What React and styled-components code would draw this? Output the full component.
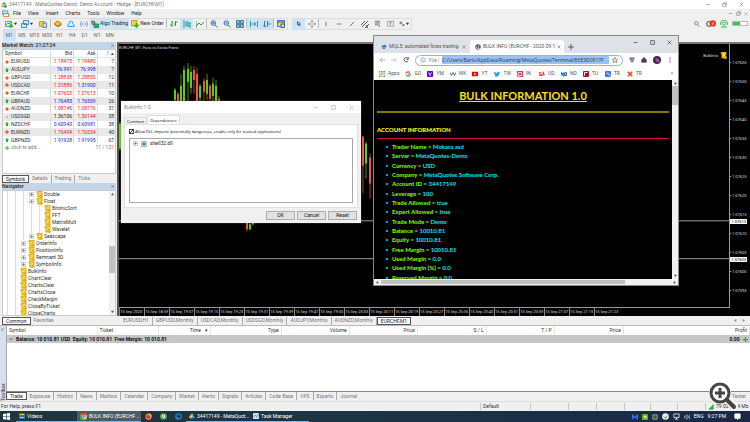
import React, { useState } from 'react'
import styled, { createGlobalStyle, css } from 'styled-components'

const GlobalStyle = createGlobalStyle`
* { box-sizing: border-box; }
body {
  margin: 0;
  overflow: hidden;
  font-family: Roboto, "Open Sans", sans-serif;
  font-size: 5px;
  line-height: 7px;
  color: #333;
}
button, input { font: inherit; color: inherit; margin: 0; }
button { border: 0; padding: 0; background: none; white-space: nowrap; }
a { color: inherit; text-decoration: none; }
svg { display: block; flex: none; }
`

const Desktop = styled.div`
position: relative;
display: flex;
flex-direction: column;
height: 100vh;
overflow: hidden;
background: #f0f0f0;
`

const Spacer = styled.span`
flex: 1;
`

/* ---------- top bars ---------- */
const TitleBar = styled.header`
display: flex;
align-items: center;
gap: 2px;
height: 9px;
padding: 0 6px 0 1px;
background: #fff;
color: #777;
`
const WinButtons = styled.div`
display: flex;
align-items: center;
gap: ${props => props.$gap || '12px'};
color: ${props => props.$color || '#888'};
`
const MenuBar = styled.nav`
display: flex;
align-items: center;
gap: 7px;
height: 9px;
padding: 0 2px;
color: #222;
svg + button { margin-left: -3px; }
`
const ToolRow = styled.div`
display: flex;
align-items: center;
height: 11px;
padding: 0 2px 0 3px;
gap: 4px;
`
const ToolGroup = styled.div`
display: flex;
align-items: center;
height: 12px;
border: 1px solid #dcdcdc;
border-left: 0;
`
const Tool = styled.button`
display: flex;
align-items: center;
justify-content: center;
gap: 1px;
height: 10px;
width: ${props => props.$wide || '13px'};
background: ${props => props.$on ? '#cce4f7' : 'transparent'};
color: #222;
`
const Divider = styled.span`
width: 1px;
height: 9px;
background: #bbb;
`
const Frames = styled.div`
display: flex;
width: 113px;
height: 11px;
margin: 1px 0 1px 3px;
color: #666;
button {
  flex: 1;
}
`
const FrameButton = styled.button`
background: ${props => props.$on ? '#cce4f7' : 'transparent'};
`
const Battery = styled.span`
width: 16px;
height: 5px;
border: 1px solid #bbb;
background: linear-gradient(90deg, #2ed03a 50%, #fff 50%);
`

/* ---------- docked panels ---------- */
const Workspace = styled.main`
display: flex;
flex: 1;
min-height: 0;
`
const Sidebar = styled.aside`
display: flex;
flex-direction: column;
width: 116px;
flex: none;
padding-left: 2px;
`
const Panel = styled.section`
display: flex;
flex-direction: column;
min-height: 0;
flex: ${props => props.$grow ? 1 : '0 0 141px'};
`
const Caption = styled.h2`
display: flex;
align-items: center;
justify-content: space-between;
flex: none;
height: 7px;
margin: 0;
padding: 0 2px 0 0;
background: #c3d5e6;
font-size: 5px;
font-weight: 500;
color: #222;
`
const PanelBody = styled.div`
display: flex;
flex: 1;
min-height: 0;
overflow: hidden;
background: #fff;
border: 1px solid #ccc;
`
const Tabs = styled.div`
display: flex;
align-items: center;
flex: none;
height: ${props => props.$line ? '10px' : '9px'};
padding-left: ${props => props.$indent || '0'};
padding-bottom: ${props => props.$line ? '1px' : '0'};
border-top: ${props => props.$line ? '1px solid #888' : '0'};
color: #777;
`
const Tab = styled.button`
height: 8px;
line-height: 7px;
padding: 0 3px;
border-right: 1px solid ${props => props.$last ? 'transparent' : '#aaa'};
${props => props.$on && css`
  border: 1px solid #555;
  background: #fff;
  color: #222;
`}
`
const Quotes = styled.table`
width: 100%;
height: 101px;
border-collapse: collapse;
th, td {
  padding: 0 1px 0 0;
  line-height: 7px;
  font-weight: 400;
  text-align: right;
}
th { color: #333; border-bottom: 1px solid #e4e4e4; }
th + th, td + td { border-left: 1px solid #ddd; }
th:first-child, td:first-child { text-align: left; padding-left: 2px; }
tbody tr:nth-child(even) { background: #e9e9e9; }
tfoot td, tfoot td + td { color: #777; border-left: 0; background: #fff; }
`
const QuotesBox = styled.div`
flex: 1;
`
const SymbolCell = styled.span`
display: flex;
align-items: center;
gap: 2px;
`
const Quote = styled.td`
color: ${props => props.$tone};
`

const Tree = styled.ul`
flex: 1;
margin: 0;
padding: 0;
list-style: none;
overflow: hidden;
`
const Node = styled.li`
display: flex;
align-items: center;
height: 7px;
white-space: nowrap;
`
const Guide = styled.span`
width: 8px;
height: 7px;
background: linear-gradient(90deg, transparent 4px, #ddd 4px, #ddd 5px, transparent 5px);
`
const Cell = styled.span`
display: flex;
justify-content: center;
width: 8px;
margin-right: ${props => props.$icon ? '1px' : '0'};
`
const ScrollBar = styled.div`
display: flex;
flex-direction: ${props => props.$row ? 'row' : 'column'};
align-items: center;
justify-content: space-between;
flex: none;
width: ${props => props.$row ? 'auto' : '6px'};
height: ${props => props.$row ? '6px' : 'auto'};
padding: ${props => props.$row ? '0 2px' : '2px 0'};
background: #f1f1f1;
color: #555;
`
const Track = styled.span`
flex: 1;
align-self: stretch;
margin: ${props => props.$row ? '1px 2px' : '1px 0'};
background: linear-gradient(${props => props.$row ? '90deg' : '180deg'},
  transparent ${props => props.$from}, #c1c1c1 ${props => props.$from},
  #c1c1c1 ${props => props.$to}, transparent ${props => props.$to});
`

/* ---------- chart ---------- */
const ChartColumn = styled.section`
display: flex;
flex-direction: column;
flex: 1;
min-width: 0;
padding-left: 1px;
`
const ChartFrame = styled.div`
position: relative;
display: grid;
grid-template-columns: 1fr 20px;
grid-template-rows: 1fr 8px;
flex: 1;
min-height: 0;
border-left: 2px solid #555;
border-top: 2px solid #777;
background: #000;
color: #ddd;
font-size: 4px;
line-height: 5px;
`
const Plot = styled.div`
position: relative;
min-height: 0;
border-right: 1px solid #999;
border-bottom: 1px solid #999;
overflow: hidden;
> svg { width: 100%; height: 100%; }
`
const ChartHead = styled.div`
position: absolute;
top: 1px;
left: 0;
right: 2px;
display: flex;
justify-content: space-between;
`
const ExpertName = styled.span`
display: flex;
align-items: center;
gap: 2px;
padding-top: 7px;
`
const Prices = styled.div`
display: flex;
flex-direction: column;
justify-content: space-between;
padding: 16px 0 15px;
span {
  display: flex;
  align-items: center;
  gap: 1px;
}
span::before {
  content: '';
  width: 1px;
  height: 1px;
  background: #999;
}
`
const Times = styled.div`
display: flex;
grid-column: 1 / 3;
overflow: hidden;
span {
  width: 25px;
  flex: none;
  border-left: 1px solid #888;
  line-height: 7px;
  white-space: nowrap;
}
`
const PriceTag = styled.span`
position: absolute;
right: 3px;
top: ${props => props.$top};
padding: 0 1px;
background: #fff;
color: #000;
`

/* ---------- toolbox ---------- */
const Toolbox = styled.section`
display: flex;
flex: 0 0 76px;
border-top: 1px solid #bbb;
`
const SideLabel = styled.div`
display: flex;
align-items: center;
justify-content: space-between;
width: 6px;
padding-bottom: 2px;
background: #d5e0ec;
writing-mode: vertical-rl;
transform: rotate(180deg);
line-height: 6px;
color: #222;
`
const ToolboxBody = styled.div`
display: flex;
flex-direction: column;
flex: 1;
min-width: 0;
`
const TradeArea = styled.div`
flex: 1;
background: #fff;
border-left: 1px solid #aaa;
`
const TradeTable = styled.table`
width: 100%;
table-layout: fixed;
border-collapse: collapse;
th {
  height: 9px;
  padding: 0 2px;
  font-weight: 400;
  text-align: right;
  border-right: 1px solid #e5e5e5;
}
th:nth-child(-n+2) { text-align: left; }
td {
  height: 8px;
  padding: 0 2px;
  background: #c6c6c6;
  color: #111;
  font-weight: 700;
  white-space: nowrap;
}
td:last-child { text-align: right; }
`
const SummaryLine = styled.span`
display: flex;
align-items: center;
justify-content: ${props => props.$end ? 'flex-end' : 'flex-start'};
gap: 3px;
`
const StatusBar = styled.footer`
display: flex;
align-items: center;
flex: none;
height: 10px;
padding-left: 1px;
border-top: 1px solid #ddd;
`
const StatusCell = styled.span`
display: flex;
align-items: center;
gap: 2px;
height: 7px;
width: ${props => props.$w};
padding-left: 2px;
border-left: 1px solid #c4c4c4;
white-space: nowrap;
`

/* ---------- taskbar ---------- */
const TaskBar = styled.nav`
display: flex;
align-items: center;
flex: none;
height: 11px;
background: linear-gradient(90deg, #20353f, #1d3445 50%, #1a2747);
color: #fff;
`
const Task = styled.button`
display: flex;
align-items: center;
gap: 2px;
height: 11px;
width: ${props => props.$w};
padding: 0 3px;
background: ${props => props.$on ? '#4a5c65' : 'transparent'};
border-bottom: 1px solid ${props => props.$open ? '#76b9ed' : 'transparent'};
justify-content: ${props => props.$center ? 'center' : 'flex-start'};
`
const Tray = styled.div`
display: flex;
align-items: center;
gap: 4px;
padding-right: 9px;
`

/* ---------- floating windows ---------- */
const Dialog = styled.form`
position: absolute;
left: 121px;
top: 101px;
width: 240px;
display: flex;
flex-direction: column;
background: #f0f0f0;
box-shadow: 0 0 1px #888;
`
const DialogTitle = styled.header`
display: flex;
align-items: center;
justify-content: space-between;
height: 12px;
padding: 0 7px 0 3px;
background: #fff;
color: #888;
`
const DialogTabs = styled.div`
display: flex;
align-items: flex-end;
height: 10px;
margin: 1px 3px 0;
font-family: "Open Sans", sans-serif;
font-size: 4px;
`
const DialogTab = styled.button`
height: ${props => props.$on ? '9px' : '7px'};
padding: 0 2px;
border: 1px solid #ddd;
border-bottom: 0;
background: ${props => props.$on ? '#fff' : '#f0f0f0'};
color: #000;
`
const DialogPage = styled.div`
display: flex;
flex-direction: column;
gap: 3px;
height: 84px;
margin: 0 3px;
padding: 3px 4px 4px;
background: #fff;
border: 1px solid #e0e0e0;
`
const CheckRow = styled.label`
display: flex;
align-items: center;
gap: 1px;
font-family: "Open Sans", sans-serif;
font-size: 4px;
color: #000;
input {
  appearance: none;
  width: 5px;
  height: 5px;
  border: 1px solid #444;
  background: #fff;
}
input:checked {
  background: linear-gradient(135deg, #fff 40%, #444 40%, #444 60%, #fff 60%);
}
`
const DllList = styled.ul`
flex: 1;
margin: 0;
padding: 1px 3px;
list-style: none;
border: 1px solid #a8a8a8;
li {
  display: flex;
  align-items: center;
  gap: 3px;
  color: #222;
}
`
const DialogButtons = styled.div`
display: flex;
justify-content: flex-end;
gap: 2px;
padding: 3px 4px;
button {
  width: 29px;
  height: 9px;
  border: 1px solid #adadad;
  background: #e1e1e1;
  line-height: 7px;
  color: #111;
}
`

const Browser = styled.section`
position: absolute;
left: 373px;
top: 35px;
width: 306px;
height: 251px;
display: flex;
flex-direction: column;
background: #fff;
border: 1px solid #888;
`
const BrowserTabs = styled.header`
display: flex;
align-items: flex-end;
flex: none;
height: 17px;
padding: 0 6px;
background: #dee1e6;
color: #555;
`
const BrowserTab = styled.button`
display: flex;
align-items: center;
gap: 2px;
width: ${props => props.$on ? '94px' : '90px'};
height: 13px;
padding: 0 4px 0 ${props => props.$on ? '5px' : '1px'};
border-radius: 3px 3px 0 0;
background: ${props => props.$on ? '#fff' : 'transparent'};
span {
  flex: 1;
  text-align: left;
}
`
const NewTab = styled.button`
display: flex;
align-items: center;
justify-content: center;
width: 14px;
height: 13px;
`
const BrowserControls = styled.div`
display: flex;
align-items: center;
align-self: stretch;
gap: 12px;
padding-bottom: 5px;
color: #333;
`
const AddressRow = styled.div`
display: flex;
align-items: center;
flex: none;
height: 14px;
padding: 0 5px;
gap: 6px;
color: #555;
`
const AddressPill = styled.label`
display: flex;
align-items: center;
gap: 3px;
flex: 1;
height: 11px;
padding: 0 4px;
border: 1px solid #8ab4f8;
border-radius: 6px;
color: #888;
input {
  flex: 1;
  min-width: 0;
  height: 8px;
  padding: 0;
  border: 0;
  background: #9ac3f5;
  color: #234;
  font-family: "Open Sans", sans-serif;
}
`
const Bookmarks = styled.nav`
display: flex;
align-items: center;
flex: none;
height: 13px;
padding: 0 5px;
gap: 6px;
color: #555;
a {
  display: flex;
  align-items: center;
  gap: 3px;
  min-width: 16px;
}
`
const PageRow = styled.div`
display: flex;
flex: 1;
min-height: 0;
`
const Report = styled.article`
display: flex;
flex-direction: column;
flex: 1;
padding: 8px 3px 0;
overflow: hidden;
background: #000;
font-family: Lato, Roboto, sans-serif;
h1 {
  margin: 0;
  font-size: 11px;
  line-height: 15px;
  text-align: center;
  text-decoration: underline;
  color: #ffe100;
}
h2 {
  margin: 13px 0 0;
  padding-bottom: 4px;
  border-bottom: 1px solid #e0103c;
  font-size: 6px;
  font-weight: 900;
  line-height: 8px;
  color: #ff0;
}
`
const Rule = styled.hr`
width: 100%;
height: 2px;
margin: 8px 0 0;
border: 0;
background: #8a7400;
`
const Facts = styled.ul`
display: flex;
flex-direction: column;
justify-content: space-between;
flex: 1;
margin: 4px 0 -3px;
padding: 0 0 0 15px;
color: #00e5f5;
font-size: 6px;
line-height: 8px;
font-weight: 700;
li {
  display: flex;
  align-items: center;
}
li::before {
  content: '';
  width: 2px;
  height: 2px;
  margin: 0 4px 0 -6px;
  border-radius: 1px;
  background: #00e5f5;
}
b { color: #7cf000; white-space: pre; }
`

const ZoomBadge = styled.button`
position: absolute;
right: 10px;
bottom: 10px;
`

/* ---------- small drawings ---------- */
const Arrow = ({ dir = 'down', size = 3 }) => {
  const points = { down: '0,1 4,1 2,4', up: '0,3 4,3 2,0', left: '3,0 3,4 0,2', right: '1,0 1,4 4,2' }
  return <svg width={size} height={size} viewBox="0 0 4 4"><polygon points={points[dir]} fill="currentColor" /></svg>
}

const Glyph = ({ d, color = 'currentColor', size = 7, fill = 'none', w = 1, children }) => (
  <svg width={size} height={size} viewBox="0 0 8 8" fill={fill} stroke={color} strokeWidth={w}>
    {d && <path d={d} />}
    {children}
  </svg>
)

const Min = () => <Glyph size={5} d="M1 4H7" />
const Max = () => <Glyph size={5} d="M1 1H7V7H1Z" />
const Restore = () => <Glyph size={5} d="M1 3H6V7H1ZM3 3V1H7V5H6" />
const Close = ({ size = 5 }) => <Glyph size={size} d="M1 1L7 7M7 1L1 7" />

const Script = () => (
  <svg width="7" height="7" viewBox="0 0 8 8">
    <path d="M1 1Q1 0 2 0H7V4H6V7H2V2H1Z" fill="#f5c518" stroke="#b98a00" strokeWidth=".6" />
    <path d="M3 2H6M3 4H5" stroke="#fff2a0" strokeWidth=".8" />
    <circle cx="6.3" cy="6.3" r="1.6" fill="#d8b030" />
  </svg>
)
const Plus = () => (
  <svg width="5" height="5" viewBox="0 0 5 5">
    <path d="M.5 .5H4.5V4.5H.5Z" fill="#fff" stroke="#bbb" strokeWidth=".7" />
    <path d="M1 2.5H4M2.5 1V4" stroke="#678" strokeWidth=".7" />
  </svg>
)
const Tick = ({ dir }) => {
  if (dir === 'flat') return <Glyph size={4} color="#999" d="M2 4A2 2 0 1 0 6 4A2 2 0 1 0 2 4" />
  return (
    <svg width="4" height="4" viewBox="0 0 4 4">
      {dir === 'up'
        ? <path d="M2 0L4 2H3V4H1V2H0Z" fill="#22b422" />
        : <path d="M2 0L4 2L2 4L0 2Z" fill="#ee5a24" />}
    </svg>
  )
}
const Terminal = ({ size = 7 }) => (
  <svg width={size} height={size} viewBox="0 0 8 8">
    <circle cx="4" cy="2.4" r="2.2" fill="#48b14c" />
    <circle cx="2.4" cy="5.2" r="2.2" fill="#f4b61e" />
    <circle cx="5.7" cy="5.5" r="2" fill="#2f80d0" />
    <circle cx="4" cy="4.2" r="1" fill="#fff" />
  </svg>
)
const Chrome = () => (
  <svg width="7" height="7" viewBox="0 0 8 8">
    <circle cx="4" cy="4" r="4" fill="#f9c513" />
    <path d="M4 4L.5 2A4 4 0 0 1 7.5 2Z" fill="#e8402f" />
    <path d="M4 4L.5 2A4 4 0 0 0 4 8Z" fill="#34a853" />
    <circle cx="4" cy="4" r="1.8" fill="#fff" />
    <circle cx="4" cy="4" r="1.4" fill="#4285f4" />
  </svg>
)
const Disc = ({ fill, mark, inner = '#fff' }) => (
  <svg width="7" height="7" viewBox="0 0 8 8">
    <circle cx="4" cy="4" r="3.8" fill={fill} />
    <path d={mark} fill="none" stroke={inner} strokeWidth="1.1" />
  </svg>
)
const Firefox = () => (
  <svg width="7" height="7" viewBox="0 0 8 8">
    <circle cx="4" cy="4.3" r="3.6" fill="#ff7a1a" />
    <path d="M5 0Q8 2 7.500 5Q6 2.500 4.500 2Z" fill="#ffcf2e" />
    <circle cx="4" cy="4.5" r="1.8" fill="#8a3ad8" />
    <path d="M.5 3Q2 2 4 3.500L2.500 5Z" fill="#f0382c" />
  </svg>
)
const Tile = ({ fill, mark, inner = '#fff' }) => (
  <svg width="6" height="6" viewBox="0 0 8 8">
    <rect width="8" height="8" rx="1" fill={fill} />
    <path d={mark} fill="none" stroke={inner} strokeWidth="1.2" />
  </svg>
)
const Cap = () => (
  <svg width="6" height="6" viewBox="0 0 8 8">
    <path d="M0 3L5 1L8 3L4 5Z" fill="#2b6fc4" />
    <path d="M1.5 4V6L4 7L6.5 5.5V4L4 5.5Z" fill="#4a8ad8" />
  </svg>
)
const Globe = () => (
  <Glyph size={6} color="#555" d="M.7 4A3.3 3.3 0 1 0 7.3 4A3.3 3.3 0 1 0 .7 4">
    <path d="M1 3L3.5 2L4 4L2.5 6M5 1.5L6.5 3L5.5 5.5" strokeWidth="1.6" />
  </Glyph>
)

/* ---------- data ---------- */
const red = '#f0201c'
const blue = '#2020f0'
const quotes = [
  ['down', 'EURUSD', '1.18473', '1.18480', 7, red, red],
  ['up', 'AUDJPY', '76.991', '76.998', 7, blue, blue],
  ['down', 'GBPUSD', '1.28838', '1.28850', 12, red, red],
  ['down', 'USDCAD', '1.31889', '1.31900', 11, red, blue],
  ['down', 'EURCHF', '1.07603', '1.07613', 10, red, red],
  ['up', 'GBPAUD', '1.76483', '1.76509', 26, blue, blue],
  ['down', 'AUDNZD', '1.08745', '1.08776', 31, red, red],
  ['flat', 'USDSGD', '1.36106', '1.36144', 38, '#222', red],
  ['up', 'NZDCHF', '0.60943', '0.60981', 38, blue, blue],
  ['down', 'EURNZD', '1.76494', '1.76534', 40, red, red],
  ['up', 'GBPNZD', '1.91928', '1.91995', 67, blue, blue],
]

const tree = [
  [2, 'Double', true], [2, 'Float', true], [3, 'BitonicSort'], [3, 'FFT'], [3, 'MatrixMult'],
  [3, 'Wavelet'], [2, 'Seascape', true], [1, 'OrderInfo', true], [1, 'PositionInfo', true],
  [1, 'Remnant 3D', true], [1, 'SymbolInfo', true], [0, 'BulkInfo'], [0, 'ChartClear'],
  [0, 'ChartsClear'], [0, 'ChartsClose'], [0, 'CheckMargin'], [0, 'CloseByTicket'], [0, 'CloseCharts'],
]

const prices = ['1.07655', '1.07650', '1.07645', '1.07640', '1.07635', '1.07630', '1.07625',
  '1.07620', '1.07615', '1.07610', '1.07605', '1.07600', '1.07595']

const times = ['2020', '18:59', '19:07', '19:15', '19:23', '19:31', '19:39', '19:47', '19:55', '20:03',
  '20:11', '20:19', '20:27', '20:35', '20:43', '20:51', '20:59', '21:07', '21:15', '21:23']

// x, high, open/close top, open/close bottom, low, rising
const candles = [
  [0, 78, 80, 105, 107, 1], [55, 44, 46, 56, 60, 1], [58, 48, 50, 58, 62, 0], [61, 30, 42, 60, 62, 1],
  [64, 22, 26, 58, 60, 1], [68, 19, 25, 38, 58, 1], [71, 22, 28, 44, 50, 1], [74, 22, 26, 36, 50, 0],
  [77, 24, 30, 60, 64, 0], [80, 40, 42, 54, 60, 1], [84, 34, 37, 48, 60, 0], [87, 30, 36, 50, 56, 1],
  [90, 40, 42, 55, 58, 0], [93, 34, 40, 52, 60, 1], [96, 36, 42, 64, 66, 1], [99, 52, 55, 64, 66, 0],
  [127, 178, 179, 186, 188, 0], [130, 178, 181, 186, 187, 1], [133, 176, 179, 181, 182, 1],
  [180, 60, 62, 66, 66, 0], [243, 92, 93, 122, 150, 0], [246, 98, 100, 120, 135, 1],
  [250, 110, 114, 140, 155, 0],
]

const facts = [
  ['Trader Name', 'Mokara asd'], ['Server', 'MetaQuotes-Demo'], ['Currency', 'USD'],
  ['Company', 'MetaQuotes Software Corp.'], ['Account ID', '34417149'], ['Leverage', '100'],
  ['Trade Allowed', 'true'], ['Expert Allowed', 'true'], ['Trade Mode', 'Demo'],
  ['Balance', '10010.81'], ['Equity', '10010.81'], ['Free Margin', '10010.81'],
  ['Used Margin', '0.0'], ['Used Margin (%)', '0.0'], ['Reserved Margin', '0.0'],
]

const bookmarks = [
  ['GO', <Glyph size={6} color="#4285f4" w={1.6} d="M6.5 6A3 3 0 0 0 7 4H4"><path d="M6.500 2A3 3 0 0 0 1.500 3" stroke="#ea4335" /><path d="M1.500 3A3 3 0 0 0 2 6" stroke="#fbbc05" /><path d="M2 6A3 3 0 0 0 6 6" stroke="#34a853" /></Glyph>],
  ['YM', <Tile fill="#5f01d1" mark="M2 2L4 5L6 2M4 5V7" />],
  ['WK', <Glyph size={6} color="#444" d="M0 2L2 6L4 2L6 6L8 2" />],
  ['YT', <Glyph size={6} color="none" fill="#f00" d="M0 1H8V7H0Z"><path d="M3 2.500L5.500 4L3 5.500Z" fill="#fff" /></Glyph>],
  ['TW', <Glyph size={6} color="none" fill="#1da1f2" d="M0 1L4 3Q4.500 .5 6 1L8 1.500L7 3Q7 7 3 7.500L0 6.500L2 6L.5 4Z" />],
  ['IN', <Glyph size={6} color="none" fill="#d6347f" d="M0 0H8V8H0Z"><path d="M0 8V4L4 8Z" fill="#fa8c30" /><path d="M2 2H6V6H2Z" stroke="#fff" fill="none" /></Glyph>],
  ['UD', <Glyph size={6} color="#e33" w={1.4} d="M3 2H1V6H3V4M4 6L6 2L7 6" />],
  ['ND', <Glyph size={6} color="#1769aa" w={1.5} d="M0 6V2L3 6V2M5 2V6Q8 6 8 4T5 2" />],
  ['TU', <Tile fill="#b3122a" mark="M2 6V2H6" />],
  ['TR', <Tile fill="#3b78e7" mark="M2 3H5M5 4L7 7" />],
  ['TR', <Glyph size={6} color="#e2401b" w={2} d="M1 1L7 7M7 1L1 7" />],
]

const MainToolbar = () => (
  <ToolRow>
    <ToolGroup>
      <Tool $wide="16px" aria-label="New chart"><Glyph size={8} color="#5a9bd0" fill="#e8f4ff" d="M.5 1.5H6.5V6.5H.5Z"><path d="M1 5L3 3L4 4L6 2" stroke="#4a4" /><path d="M6 4V8M4 6H8" stroke="#2b2" strokeWidth="1.5" /></Glyph><Arrow /></Tool>
      <Tool $wide="16px" aria-label="Profiles"><Glyph size={8} color="#3b8fd8" fill="#d8ecff" d="M2.5 .5H7.5V4.5H2.5ZM.5 3.5H5.5V7.5H.5Z" /><Arrow /></Tool>
      <Tool $wide="15px" aria-label="Data window"><Glyph size={8} color="#d29a12" fill="#f7cf4a" d="M.5 1.5H5.5V6.5H.5Z"><path d="M4 3H7.5V7.5H4Z" fill="#cfe4fa" stroke="#4a8ad8" /></Glyph></Tool>
      <Divider />
      <Tool aria-label="Market"><Glyph size={8} color="#b07d10" fill="#f3c136" d="M0 4L3 1L7 3L7 5L4 7Z"><path d="M1 5L4 6L7 4" /></Glyph></Tool>
      <Tool aria-label="Cloud"><Glyph size={8} color="#3b9be8" fill="#dff0ff" d="M1 6.5Q0 4.5 2 4Q2 1 4 1T6 4Q8 4.5 7 6.5Z" /></Tool>
      <Tool aria-label="Signals"><Glyph size={8} color="#5a9bd8" d="M1.5 1Q-.5 4 1.5 7M6.5 1Q8.5 4 6.5 7M3 2.5Q2 4 3 5.5M5 2.5Q6 4 5 5.5" w={.8} /></Tool>
      <Tool $on $wide="39px"><Glyph size={8} color="#555" fill="#e6b422" d="M1 1L4 2L3 5L1 4Z"><path d="M4 4H7.5V7.5H3Z" fill="#2fb84a" stroke="#287" /></Glyph>Algo Trading</Tool>
      <Tool $wide="37px"><Glyph size={8} color="#c79a1a" fill="#f6d458" d="M.5 .5H6V6H.5Z"><path d="M5.5 3V8M3 5.5H8" stroke="#2b2" strokeWidth="1.6" /></Glyph>New Order</Tool>
      <Divider />
      <Tool aria-label="Bars"><Glyph size={8} color="#2a9d4a" d="M2 1V7M0 5H2M2 2H3M5.5 1V6M4 4H5.5M5.5 2H7.5" /></Tool>
      <Tool $on aria-label="Candles"><Glyph size={8} color="#2a9d8a" d="M1 0V8M3 2H5V6H3ZM6 3H8V7H6Z" /></Tool>
      <Tool aria-label="Line"><Glyph size={8} color="#2a9d4a" d="M0 6L3 3L5 5L8 2M0 1V8" /></Tool>
      <Divider />
      <Tool aria-label="Zoom in"><Glyph size={8} color="#3b78c8" fill="#cfe4fa" d="M1 3A2.3 2.3 0 1 0 5.6 3A2.3 2.3 0 1 0 1 3M5 5L7.5 7.5M2 3H4.5M3.3 1.8V4.2" /></Tool>
      <Tool aria-label="Zoom out"><Glyph size={8} color="#3b78c8" fill="#cfe4fa" d="M1 3A2.3 2.3 0 1 0 5.6 3A2.3 2.3 0 1 0 1 3M5 5L7.5 7.5M2 3H4.5" /></Tool>
      <Tool aria-label="Tile"><Glyph size={8} color="#3b78c8" fill="#8fd18f" d="M.5 .5H3.5V3.5H.5ZM4.5 .5H7.5V3.5H4.5ZM.5 4.5H3.5V7.5H.5ZM4.5 4.5H7.5V7.5H4.5Z" /></Tool>
      <Divider />
      <Tool $on aria-label="Auto scroll"><Glyph size={8} color="#2a9dba" d="M.5 1V7M7.5 1V7M1 4H6M4 2L6 4L4 6" /></Tool>
      <Tool $on aria-label="Chart shift"><Glyph size={8} color="#2a7dca" d="M1.5 1V7M4.5 1V7M5 4H8M3 6H0" /></Tool>
      <Divider />
      <Tool aria-label="Template"><Glyph size={8} color="#3b78c8" fill="#bfe0a0" d="M.5 .5H7.5V6.5H.5Z"><path d="M4 4H7.5V7.5H4ZM0 2H8" stroke="#555" fill="#ddd" /></Glyph></Tool>
    </ToolGroup>
    <ToolGroup>
      <Tool $on aria-label="Cursor"><Glyph size={6} color="#333" d="M2 1L6 4L4 4.5L5 7M2 1V5L4 4.5" /></Tool>
      <Tool aria-label="Crosshair"><Glyph size={8} color="#777" d="M4 0V3M4 5V8M0 4H3M5 4H8" /></Tool>
      <Divider />
      <Tool aria-label="Vertical line"><Glyph size={6} color="#555" d="M4 1V7" /></Tool>
      <Tool aria-label="Horizontal line"><Glyph size={6} color="#555" d="M1 4H7" /></Tool>
      <Tool aria-label="Trend line"><Glyph size={6} color="#555" d="M1 7L7 1" /></Tool>
      <Tool aria-label="Channel"><Glyph size={8} color="#555" d="M0 5L4 1M1 7L7 1M4 8L8 4M5 7H7M6 5V8" /></Tool>
      <Tool aria-label="Fibonacci"><Glyph size={7} color="#666" d="M1 1.5H7M1 3.5H7M1 5.5H5M6 5V8" /></Tool>
      <Tool aria-label="Text"><Glyph size={7} color="#777" d="M.5 1.5H7.5V7H.5Z" w={.7}><path d="M2.5 3H5.5M4 3V6" /></Glyph></Tool>
      <Tool $wide="14px" aria-label="Shapes"><Glyph size={6} color="#555" d="M1 2L3 1L4 3L2 4ZM4 5L7 6M5 7L7 4" /><Arrow /></Tool>
    </ToolGroup>
    <Spacer />
    <Tool aria-label="Search" $wide="10px"><Glyph size={6} color="#666" d="M1 3A2.2 2.2 0 1 0 5.4 3A2.2 2.2 0 1 0 1 3M5 5L7.5 7.5" /></Tool>
    <Tool aria-label="Notifications" $wide="10px">
      <svg width="10" height="8" viewBox="0 0 10 8"><circle cx="3" cy="4" r="2.5" fill="#ddd" stroke="#555" /><circle cx="6.8" cy="3.4" r="3.2" fill="#e8371c" /><path d="M7 2V5" stroke="#fff" strokeWidth=".8" /></svg>
    </Tool>
    <Tool aria-label="Level" $wide="8px"><Glyph size={8} color="#2ab83a" d="M1 5A3.4 3.4 0 1 1 7 5M2.6 4.4A1.6 1.6 0 1 1 5.4 4.4M4 4V6M1 7H7" /></Tool>
    <Battery />
  </ToolRow>
)

const MarketWatch = () => (
  <Panel>
    <Caption>Market Watch: 21:27:24 <Close size={3} /></Caption>
    <PanelBody>
      <QuotesBox>
        <Quotes>
          <colgroup><col width="42%" /><col width="21%" /><col width="21%" /><col width="16%" /></colgroup>
          <thead><tr><th>Symbol</th><th>Bid</th><th>Ask</th><th>! &nbsp;▴</th></tr></thead>
          <tbody>
            {quotes.map(([dir, name, bid, ask, spread, c1, c2]) => (
              <tr key={name}>
                <td><SymbolCell><Tick dir={dir} />{name}</SymbolCell></td>
                <Quote $tone={c1}>{bid}</Quote>
                <Quote $tone={c2}>{ask}</Quote>
                <td>{spread}</td>
              </tr>
            ))}
          </tbody>
          <tfoot>
            <tr>
              <td><SymbolCell><Glyph size={4} color="#2b2" w={2} d="M4 0V8M0 4H8" />click to add...</SymbolCell></td>
              <td colSpan="3">11 / 131</td>
            </tr>
          </tfoot>
        </Quotes>
      </QuotesBox>
    </PanelBody>
    <Tabs>
      <Tab $on>Symbols</Tab><Tab>Details</Tab><Tab>Trading</Tab><Tab $last>Ticks</Tab>
    </Tabs>
  </Panel>
)

const Navigator = () => (
  <Panel $grow>
    <Caption>Navigator <Close size={3} /></Caption>
    <PanelBody>
      <Tree>
        {tree.map(([level, name, branch]) => (
          <Node key={name}>
            {Array.from({ length: level + 1 }, (_, i) => <Guide key={i} />)}
            <Cell>{branch ? <Plus /> : <Guide />}</Cell>
            <Cell $icon><Script /></Cell>
            {name}
          </Node>
        ))}
      </Tree>
      <ScrollBar><Arrow dir="up" /><Track $from="44%" $to="68%" /><Arrow /></ScrollBar>
    </PanelBody>
    <Tabs><Tab $on>Common</Tab><Tab $last>Favorites</Tab></Tabs>
  </Panel>
)

const Chart = () => (
  <ChartColumn>
    <ChartFrame>
      <Plot>
        <svg viewBox="0 0 610 264" preserveAspectRatio="none">
          <path d="M0 177.500H610M0 215.500H610" stroke="#999" strokeWidth="1" />
          {candles.map(([x, high, top, bottom, low, up]) => (
            <g key={x} fill={up ? '#5fd000' : '#f0583c'}>
              <rect x={x + .5} y={high} width="1" height={low - high} opacity=".7" />
              <rect x={x} y={top} width="2" height={bottom - top} />
            </g>
          ))}
        </svg>
        <ChartHead>
          <span>EURCHF, M1: Euro vs Swiss Franc</span>
          <ExpertName>BulkInfo <Script /></ExpertName>
        </ChartHead>
      </Plot>
      <Prices>{prices.map(p => <span key={p}>{p}</span>)}</Prices>
      <Times>{times.map(t => <span key={t}>15 Sep {t}</span>)}</Times>
      <PriceTag $top="175px">1.07613</PriceTag>
      <PriceTag $top="213px">1.07603</PriceTag>
    </ChartFrame>
    <Tabs $indent="3px">
      {['EURUSD,H1', 'GBPUSD,Monthly', 'USDCAD,Monthly', 'USDSGD,Monthly', 'AUDJPY,Monthly', 'AUDNZD,Monthly'].map(t => (
        <Tab key={t}>{t}</Tab>
      ))}
      <Tab $on>EURCHF,M1</Tab>
      <Spacer />
      <WinButtons $gap="5px"><Arrow dir="left" /><Arrow dir="right" /><span /></WinButtons>
    </Tabs>
  </ChartColumn>
)

const ToolboxPanel = () => {
  const cols = [90, 61, 52, 71, 68, 68, 69, 68, 69, 126]
  const names = ['Trade', 'Exposure', 'History', 'News', 'Mailbox', 'Calendar', 'Company', 'Market',
    'Alerts', 'Signals', 'Articles', 'Code Base', 'VPS', 'Experts', 'Journal']
  return (
    <Toolbox>
      <SideLabel>Toolbox <Close size={3} /></SideLabel>
      <ToolboxBody>
        <TradeArea>
          <TradeTable>
            <colgroup>{cols.map((c, i) => <col key={i} style={{ width: `${c / 7.42}%` }} />)}</colgroup>
            <thead>
              <tr>
                <th>Symbol</th><th>Ticket</th><th>Time &nbsp; ▾</th><th>Type</th><th>Volume</th>
                <th>Price</th><th>S / L</th><th>T / P</th><th>Price</th><th>Profit</th>
              </tr>
            </thead>
            <tbody>
              <tr>
                <td colSpan="9"><SummaryLine><Glyph size={4} d="M1 3L4 6L7 3" />Balance: 10 010.81 USD &nbsp;Equity: 10 010.81 &nbsp;Free Margin: 10 010.81</SummaryLine></td>
                <td><SummaryLine $end>0.00 <Glyph size={5} color="#2b2" w={2} fill="#fff" d="M4 0V8M0 4H8" /></SummaryLine></td>
              </tr>
            </tbody>
          </TradeTable>
        </TradeArea>
        <Tabs $line>
          {names.map((n, i) => <Tab key={n} $on={i === 0} $last={i === names.length - 1}>{n}</Tab>)}
          <Spacer />
          <Tab $last>Strategy Tester</Tab>
        </Tabs>
      </ToolboxBody>
    </Toolbox>
  )
}

const SettingsDialog = () => {
  const [allow, setAllow] = useState(true)
  return (
    <Dialog onSubmit={e => e.preventDefault()}>
      <DialogTitle>BulkInfo 1.0 <WinButtons $gap="13px" $color="#aaa"><Min /><Max /><Close /></WinButtons></DialogTitle>
      <DialogTabs><DialogTab type="button">Common</DialogTab><DialogTab type="button" $on>Dependencies</DialogTab></DialogTabs>
      <DialogPage>
        <CheckRow>
          <input type="checkbox" checked={allow} onChange={e => setAllow(e.target.checked)} />
          Allow DLL imports (potentially dangerous, enable only for trusted applications)
        </CheckRow>
        <DllList>
          <li><Plus /><Glyph size={6} color="#789" fill="#fff" d="M1 .5H7V7.5H1Z"><circle cx="4" cy="4" r="1.6" fill="#38c" stroke="#26a" /></Glyph>shell32.dll</li>
        </DllList>
      </DialogPage>
      <DialogButtons><button>OK</button><button type="button">Cancel</button><button type="button">Reset</button></DialogButtons>
    </Dialog>
  )
}

const BrowserWindow = () => (
  <Browser>
    <BrowserTabs>
      <BrowserTab><Cap /><span>MQL5: automated forex trading.</span><Close size={4} /></BrowserTab>
      <BrowserTab $on><Globe /><span>BULK INFO (EURCHF - 2020.09.1</span><Close size={4} /></BrowserTab>
      <NewTab aria-label="New tab"><Glyph size={6} color="#333" d="M4 0V8M0 4H8" /></NewTab>
      <Spacer />
      <BrowserControls><Min /><Max /><Close /></BrowserControls>
    </BrowserTabs>
    <AddressRow>
      <Glyph size={6} color="#999" d="M8 4H1M4 1L1 4L4 7" />
      <Glyph size={6} color="#bbb" d="M0 4H7M4 1L7 4L4 7" />
      <Glyph size={6} color="#333" d="M7 2A3 3 0 1 0 7 5M7 0V3H4" />
      <AddressPill>
        <Glyph size={6} d="M1 4A3 3 0 1 0 7 4A3 3 0 1 0 1 4M4 3.500V6M4 2V3" w={.8} />
        File |
        <input type="text" defaultValue="C:/Users/Baris/AppData/Roaming/MetaQuotes/Terminal/E6E3D0917F" />
        <Glyph size={6} color="#555" d="M4 .5L5 3H7.500L5.500 5L6.300 7.500L4 6L1.700 7.500L2.500 5L.5 3H3Z" w={.8} />
      </AddressPill>
      <Glyph size={6} color="#777" fill="#999" d="M1 1H7L6 5L4 7.500L2 5ZM2 2L5 5" />
      <Glyph size={6} color="#444" fill="#444" d="M1 3H3V1H5V3H7V7H1Z" />
      <svg width="8" height="8" viewBox="0 0 8 8"><circle cx="4" cy="4" r="4" fill="#3b2a55" /><path d="M2 3Q4 1 6 4T4 6" fill="#c24a9a" /></svg>
      <Glyph size={6} color="#444" w={1.3} d="M4 .5V2M4 3.300V4.700M4 6V7.500" />
    </AddressRow>
    <Bookmarks>
      <a href="#apps"><Glyph size={6} color="#e55" w={2} d="M0 1H2"><path d="M3 1H5M0 7H2" stroke="#4a4" /><path d="M6 1H8M3 4H5M6 7H8" stroke="#48e" /><path d="M0 4H2M6 4H8M3 7H5" stroke="#fa0" /></Glyph>Apps</a>
      {bookmarks.map(([name, icon], i) => <a key={i} href={`#${name}`}>{icon}{name}</a>)}
      <Spacer />
      <span>»</span>
    </Bookmarks>
    <PageRow>
      <Report>
        <h1>BULK INFORMATION 1.0</h1>
        <Rule />
        <h2>ACCOUNT INFORMATION</h2>
        <Facts>{facts.map(([k, v]) => <li key={k}><b>{k} = </b>{v}</li>)}</Facts>
      </Report>
      <ScrollBar><Arrow dir="up" /><Track $from="0%" $to="10%" /><Arrow /></ScrollBar>
    </PageRow>
    <ScrollBar $row><Arrow dir="left" /><Track $row $from="0%" $to="84%" /><Arrow dir="right" /></ScrollBar>
  </Browser>
)

const Taskbar = () => (
  <TaskBar>
    <Task $w="16px" aria-label="Start"><Glyph size={7} color="none" fill="#fff" d="M0 1L3.500 .5V3.700H0ZM4.200 .4L8 0V3.700H4.200ZM0 4.300H3.500V7.500L0 7ZM4.200 4.300H8V8L4.200 7.600Z" /></Task>
    <Task $w="61px" $open><Tile fill="#4a6a90" mark="M1 2H7M1 6H7" inner="#f2c94c" />Videos</Task>
    <Task $w="64px" $on $open><Chrome />BULK INFO (EURCHF ...</Task>
    <Task $w="15px" $center aria-label="Firefox"><Firefox /></Task>
    <Task $w="15px" $center aria-label="uTorrent"><Disc fill="#64b04a" mark="M3 2V4Q3 5.500 5 5V2" /></Task>
    <Task $w="15px" $center aria-label="Edge"><Disc fill="#1f86d0" mark="M2 4A2 2 0 1 1 6 4H3Q4 6 6 5.500" inner="#123" /></Task>
    <Task $w="64px" $open><Terminal size={6} />34417149 - MetaQuot...</Task>
    <Task $w="59px" $open><Tile fill="#cfe0ee" mark="M1 5L3 3L5 5L7 2" inner="#3b78a8" />Task Manager</Task>
    <Spacer />
    <Tray>
      <Glyph size={6} color="#2f6fe8" w={2} d="M1 7V2L4 5L7 2V7" />
      <Tile fill="#6ab010" mark="M2 4Q4 1 6 4Q4 6 3 4" />
      <Glyph size={6} color="#aaa" fill="#555" d="M1 1H7V7H1Z" />
      <Disc fill="#eee" mark="M2 4L4 6L6 3" inner="#2a9d4a" />
      <Glyph size={7} color="#ddd" d="M1 1H7V5H1ZM4 5V7M2 7H6" />
      <Glyph size={6} color="#ddd" d="M0 3H2L4 1V7L2 5H0ZM5.500 2.500Q6.500 4 5.500 5.500M7 1Q8.500 4 7 7" w={.8} />
      <span>ENG</span>
      <span>9:27 PM</span>
      <Spacer />
      <Glyph size={7} color="#fff" fill="#fff" d="M1 1H7V6H5L4 7.500V6H1Z" />
    </Tray>
  </TaskBar>
)

const App = () => {
  const [frame, setFrame] = useState('M1')
  return (
    <>
      <GlobalStyle />
      <Desktop>
        <TitleBar>
          <Terminal size={6} />
          <span>34417149 - MetaQuotes-Demo: Demo Account - Hedge - [EURCHF,M1]</span>
          <Spacer />
          <WinButtons><Min /><Restore /><Close /></WinButtons>
        </TitleBar>
        <MenuBar>
          <Glyph size={7} color="#3b9be8" fill="#cfe8ff" d="M.5 1H6.500V5H.5Z"><path d="M2 4H7.500V7.500H2Z" stroke="#e0683a" fill="#fff" /></Glyph>
          {['File', 'View', 'Insert', 'Charts', 'Tools', 'Window', 'Help'].map(m => <button key={m}>{m}</button>)}
          <Spacer />
          <WinButtons $gap="3px"><Min /><Restore /><Close size={4} /></WinButtons>
        </MenuBar>
        <MainToolbar />
        <Frames>
          {['M1', 'M5', 'M15', 'M30', 'H1', 'H4', 'D1', 'W1', 'MN'].map(f => (
            <FrameButton key={f} $on={f === frame} onClick={() => setFrame(f)}>{f}</FrameButton>
          ))}
        </Frames>
        <Workspace>
          <Sidebar>
            <MarketWatch />
            <Navigator />
          </Sidebar>
          <Chart />
        </Workspace>
        <ToolboxPanel />
        <StatusBar>
          <span>For Help, press F1</span>
          <Spacer />
          <StatusCell $w="50px">Default</StatusCell>
          {[38, 28, 28, 26, 27, 28].map((w, i) => <StatusCell key={i} $w={`${w}px`} />)}
          <StatusCell $w="45px"><Glyph size={6} color="#2db52d" fill="#2db52d" d="M1 7H7V1Z" />79.02 / 0.4 Mb</StatusCell>
        </StatusBar>
        <Taskbar />
        <SettingsDialog />
        <BrowserWindow />
        <ZoomBadge aria-label="Zoom picture">
          <svg width="32" height="32" viewBox="0 0 32 32">
            <path d="M20 20L26 26" stroke="#fff" strokeWidth="8" strokeLinecap="round" opacity=".7" />
            <circle cx="12" cy="13" r="11" fill="#fff" opacity=".8" />
            <circle cx="12" cy="13" r="9" fill="#fff" stroke="#444" strokeWidth="3" />
            <path d="M12 8V18M7 13H17" stroke="#444" strokeWidth="3" />
            <path d="M19 20L26 27" stroke="#444" strokeWidth="4" strokeLinecap="round" />
          </svg>
        </ZoomBadge>
      </Desktop>
    </>
  )
}

export default App
